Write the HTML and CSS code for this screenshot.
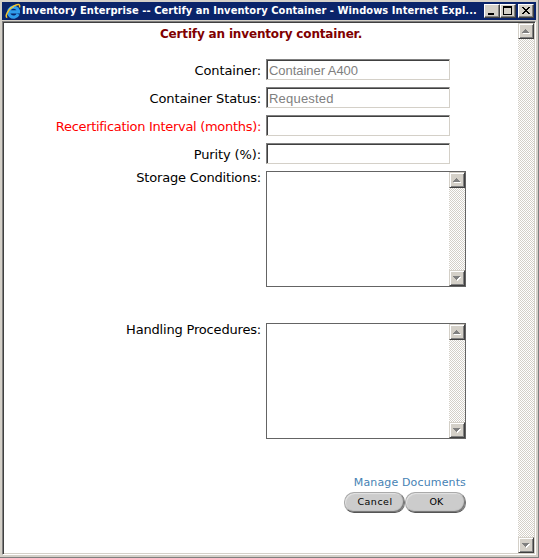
FILE: index.html
```
<!DOCTYPE html>
<html lang="en">
<head>
<meta charset="utf-8">
<title>Certify an Inventory Container</title>
<link rel="stylesheet" href="styles.css">
</head>
<body>
<div class="window">
  <header class="titlebar">
    <svg class="logo" width="16" height="16" viewBox="0 0 16 16">
      <path d="M13.2 11.2A5 5 0 1 1 13.4 7.7V8.8H5.2" fill="none" stroke="#2f9cec" stroke-width="3.2"/>
      <path d="M4.2 6.5Q5.8 3.7 9 4" fill="none" stroke="#85d9fa" stroke-width="1.3"/>
      <path d="M2.3 14.6C-.9 14 3.2 6.5 8.5 3.2 12.5.7 15.6.5 14.5 4.5" fill="none" stroke="#f5c52e" stroke-width="1.5"/>
    </svg>
    <h1 class="caption"><span>Inventory Enterprise -- Certify an Inventory Container - Windows Internet Expl...</span></h1>
    <div class="controls">
      <span class="control"><svg width="14" height="12" shape-rendering="crispEdges"><path d="M3 8h6v2H3z"/></svg></span>
      <span class="control"><svg width="14" height="12" shape-rendering="crispEdges"><path fill-rule="evenodd" d="M2 1h9v9H2zM3 3v6h7V3z"/></svg></span>
      <span class="control close"><svg width="14" height="12" shape-rendering="crispEdges"><path d="M3 2h2v1h1v1h2V3h1V2h2v1h-1v1H9v1H8v1h1v1h1v1h1v1H9V8H8V7H6v1H5v1H3V8h1V7h1V6h1V5H5V4H4V3H3z"/></svg></span>
    </div>
  </header>
  <div class="viewport">
    <main class="page">
      <h2 class="heading"><span>Certify an inventory container.</span></h2>
      <form class="form">
        <label class="label"><span class="t-container">Container:</span></label>
        <div class="field disabled"><span class="v-container">Container A400</span></div>
        <label class="label"><span class="t-status">Container Status:</span></label>
        <div class="field disabled"><span class="v-status">Requested</span></div>
        <label class="label required"><span class="t-interval">Recertification Interval (months):</span></label>
        <div class="field"></div>
        <label class="label"><span class="t-purity">Purity (%):</span></label>
        <div class="field"></div>
        <label class="label top"><span class="t-storage">Storage Conditions:</span></label>
        <div class="area"><div class="scrollbar">
          <span class="arrow"><svg width="12" height="12" shape-rendering="crispEdges"><path class="shine" d="M3 8h7v1H3z"/><path class="tri" d="M5 4h1v1h1v1h1v1h1v1H2V7h1V6h1V5h1z"/></svg></span>
          <span class="arrow"><svg width="12" height="12" shape-rendering="crispEdges"><path class="shine" d="M3 5h7v1H9v1H8v1H7v1H6V8z"/><path class="tri" d="M2 4h7v1H8v1H7v1H6v1H5V7H4V6H3V5H2z"/></svg></span>
        </div></div>
        <label class="label top"><span class="t-handling">Handling Procedures:</span></label>
        <div class="area"><div class="scrollbar">
          <span class="arrow"><svg width="12" height="12" shape-rendering="crispEdges"><path class="shine" d="M3 8h7v1H3z"/><path class="tri" d="M5 4h1v1h1v1h1v1h1v1H2V7h1V6h1V5h1z"/></svg></span>
          <span class="arrow"><svg width="12" height="12" shape-rendering="crispEdges"><path class="shine" d="M3 5h7v1H9v1H8v1H7v1H6V8z"/><path class="tri" d="M2 4h7v1H8v1H7v1H6v1H5V7H4V6H3V5H2z"/></svg></span>
        </div></div>
      </form>
      <div class="footer">
        <a class="link">Manage Documents</a>
        <div class="buttons"><span class="button cancel"><span>Cancel</span></span><span class="button ok"><span>OK</span></span></div>
      </div>
    </main>
    <div class="scrollbar main-scroll">
      <span class="arrow"><svg width="12" height="12" shape-rendering="crispEdges"><path class="shine" d="M3 8h7v1H3z"/><path class="tri" d="M5 4h1v1h1v1h1v1h1v1H2V7h1V6h1V5h1z"/></svg></span>
      <span class="arrow"><svg width="12" height="12" shape-rendering="crispEdges"><path class="shine" d="M3 5h7v1H9v1H8v1H7v1H6V8z"/><path class="tri" d="M2 4h7v1H8v1H7v1H6v1H5V7H4V6H3V5H2z"/></svg></span>
    </div>
  </div>
</div>
</body>
</html>
```

FILE: styles.css
```
* { box-sizing: border-box; }
body { margin: 0; overflow: hidden; font-family: "DejaVu Sans", sans-serif; }
svg { display: block; }
.window {
  width: 539px; height: 558px; padding: 2px 1px 2px 2px;
  background: #d4d0c8; border-right: 1px solid #808080; border-bottom: 1px solid #808080;
  display: flex; flex-direction: column;
}
.titlebar {
  height: 18px; width: 534px; background: #0a246a; color: #fff;
  display: flex; align-items: center;
}
.logo { margin: 0 1px 0 3px; flex: none; }
.caption {
  margin: 0; flex: 1; white-space: nowrap;
  font: bold 11px/18px "DejaVu Sans Condensed", "DejaVu Sans", sans-serif; letter-spacing: 0.07px;
}
.controls { display: flex; margin-right: 2px; }
.control {
  width: 16px; height: 14px; background: #d4d0c8; border: 1px solid;
  border-color: #fff #404040 #404040 #fff; box-shadow: inset -1px -1px #808080;
}
.close { margin-left: 2px; }
.viewport {
  margin-top: 1px; width: 534px; height: 534px; display: flex; background: #fff;
  border: 1px solid; border-color: #808080 #fff #fff #808080; padding: 1px;
  box-shadow: inset 1px 1px #404040, inset -1px -1px #d4d0c8;
}
.page { width: 514px; height: 530px; font-size: 13px; }
.heading {
  margin: 0; height: 36px; padding-top: 2px; text-align: center; color: #800000;
  font: bold 12px/18px "DejaVu Sans", sans-serif; letter-spacing: -0.16px;
}
.form {
  display: grid; grid-template-columns: 257px 200px; column-gap: 5px;
  grid-template-rows: 28px 28px 28px 28px 152px 116px; margin: 0;
}
.label { text-align: right; white-space: nowrap; line-height: 24px; color: #000; letter-spacing: -0.12px; }
.top { line-height: 14px; letter-spacing: -0.18px; }
.required { color: #f00; letter-spacing: -0.3px; }
.field {
  width: 184px; height: 21px; border: 1px solid; border-color: #808080 #d4d0c8 #d4d0c8 #808080;
  box-shadow: inset 1px 1px #404040; padding-left: 2px;
  font: 13px/21px "Liberation Sans", sans-serif; background: #fff; white-space: nowrap;
}
.v-container { letter-spacing: -0.05px; }
.v-status { letter-spacing: 0.2px; }
.disabled { color: #808080; }
.area { width: 200px; height: 116px; border: 1px solid #646464; display: flex; justify-content: flex-end; }
.scrollbar {
  width: 16px; display: flex; flex-direction: column; justify-content: space-between;
  background: repeating-conic-gradient(#d4d0c8 0 25%, #fff 0 50%) 0 0 / 2px 2px;
}
.main-scroll { height: 530px; }
.arrow {
  width: 16px; height: 16px; background: #d4d0c8; border: 1px solid;
  border-color: #d4d0c8 #404040 #404040 #d4d0c8;
  box-shadow: inset 1px 1px #fff, inset -1px -1px #808080; padding: 1px;
}
.tri { fill: #808080; }
.shine { fill: #fff; }
.footer { width: 462px; padding-top: 37px; display: flex; flex-direction: column; align-items: flex-end; }
.link { font-size: 11px; line-height: 14px; height: 16px; color: #4682b4; white-space: nowrap; letter-spacing: 0.14px; }
.buttons { display: flex; }
.button {
  width: 61px; height: 21px; border-radius: 10px; color: #000; text-align: center;
  background: #ccc; border: 1px solid; border-color: #aaa #777 #555 #aaa;
  box-shadow: inset 1px 1px 1px #e4e4e4, inset -1px -1px 1px #707070;
  font-size: 9.5px; line-height: 18px; white-space: nowrap;
}
.cancel { letter-spacing: 0.5px; padding-left: 1px; }
.ok { padding-left: 2px; letter-spacing: 0.2px; }
```
